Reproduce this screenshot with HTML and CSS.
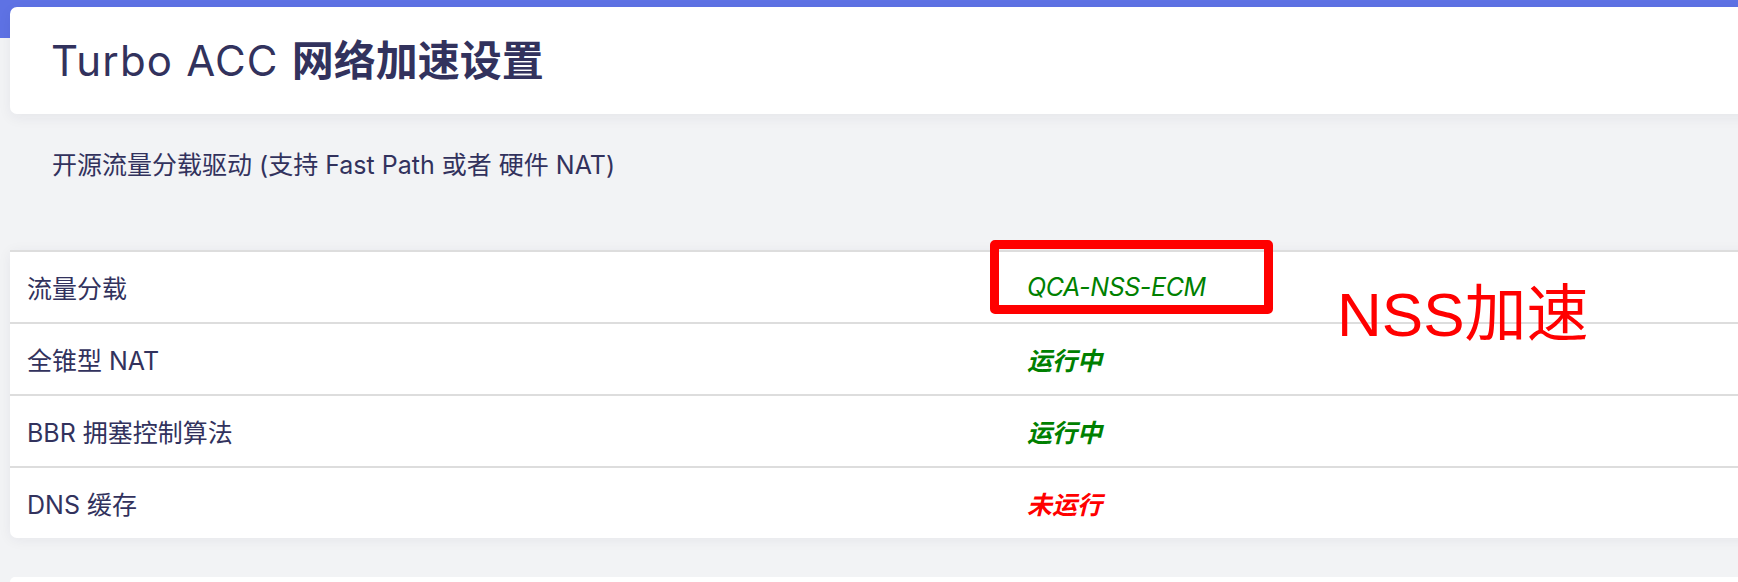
FILE: index.html
```html
<!DOCTYPE html>
<html lang="zh-CN">
<head>
<meta charset="utf-8">
<title>Turbo ACC 网络加速设置</title>
<link rel="stylesheet" href="styles.css">
</head>
<body>
<div class="page">
  <header class="title-card">
    <h2 class="title">Turbo ACC <span class="title-cjk">网络加速设置</span></h2>
  </header>
  <p class="descr">开源流量分载驱动 (支持 Fast Path 或者 硬件 NAT)</p>
  <div class="table-card">
    <div class="row">
      <div class="label">流量分载</div>
      <div class="value"><em class="engine">QCA-NSS-ECM</em></div>
    </div>
    <div class="row">
      <div class="label">全锥型 NAT</div>
      <div class="value"><em class="status running">运行中</em></div>
    </div>
    <div class="row">
      <div class="label">BBR 拥塞控制算法</div>
      <div class="value"><em class="status running">运行中</em></div>
    </div>
    <div class="row">
      <div class="label">DNS 缓存</div>
      <div class="value"><em class="status stopped">未运行</em></div>
    </div>
  </div>
  <div class="next-card"></div>
  <div class="mark-box"></div>
  <div class="mark-text">NSS加速</div>
</div>
</body>
</html>
```
FILE: styles.css
```css
html, body {
  margin: 0;
  height: 100%;
  overflow: hidden;
}
body {
  background: linear-gradient(#5e72e4 0, #5e72e4 38px, #f2f3f5 38px, #f2f3f5 100%);
  font-family: Inter, "Noto Sans CJK SC", sans-serif;
  color: #32325d;
}
.page {
  position: relative;
  padding: 7px 0 0 10px;
  margin-right: -40px;
}
.title-card {
  height: 107px;
  box-sizing: border-box;
  background: #fff;
  border-radius: 7px;
  box-shadow: 0 4px 14px rgba(30, 40, 70, 0.06);
  display: flex;
  align-items: center;
  padding-left: 41px;
}
.title {
  margin: 0;
  font-size: 42px;
  line-height: 50px;
  font-weight: 400;
  letter-spacing: 1.2px;
}
.title-cjk {
  font-weight: 700;
  letter-spacing: 0;
}
.descr {
  margin: 0;
  padding: 32px 0 66px 42px;
  font-size: 25px;
  line-height: 38px;
}
.table-card {
  background: #fff;
  border-radius: 0 0 7px 7px;
  box-shadow: 0 2px 14px rgba(30, 40, 70, 0.06);
}
.row {
  display: grid;
  grid-template-columns: 1000px 1fr;
  align-items: center;
  height: 72px;
  box-sizing: border-box;
  border-top: 2px solid #dddddd;
  font-size: 25px;
}
.label, .value {
  padding-left: 17px;
}
.engine {
  font-style: italic;
  color: #008000;
  letter-spacing: -0.4px;
}
.status {
  font-style: italic;
  font-weight: 700;
}
.running { color: #008000; }
.stopped { color: #ff0000; }
.next-card {
  margin-top: 39px;
  height: 5px;
  background: #fff;
  border-radius: 7px 7px 0 0;
}
.mark-box {
  position: absolute;
  left: 990px;
  top: 240px;
  width: 283px;
  height: 74px;
  box-sizing: border-box;
  border: 9px solid #ff0000;
  border-radius: 5px;
}
.mark-text {
  position: absolute;
  left: 1337px;
  top: 284px;
  font-family: "Liberation Sans", "Noto Sans CJK SC", sans-serif;
  font-size: 62px;
  line-height: 62px;
  color: #ff0000;
  white-space: nowrap;
}
```
